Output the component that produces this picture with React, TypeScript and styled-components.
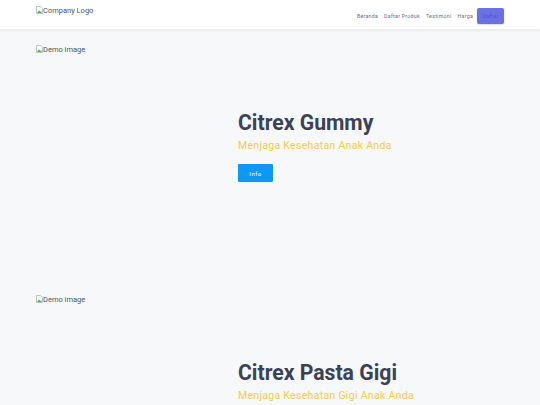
import styled, { createGlobalStyle } from 'styled-components';

const GlobalStyle = createGlobalStyle`
  body {
    margin: 0;
    background-color: #f7f8fa;
    font-family: Roboto, "Liberation Sans", sans-serif;
    overflow: hidden;
  }
`;

const Header = styled.header`
  height: 29px;
  background-color: #ffffff;
  box-shadow: 0 1px 3px rgba(0, 0, 0, 0.08);
  display: flex;
  align-items: flex-start;
  justify-content: space-between;
  padding: 0 36px;
`;

const Alt = styled.span<{ $top: number }>`
  display: inline-flex;
  align-items: flex-start;
  margin-top: ${props => props.$top}px;
  font-family: Roboto, "Liberation Sans", sans-serif;
  font-size: 7.5px;
  color: #555555;
  line-height: 9px;
`;

const Nav = styled.nav`
  display: flex;
  align-items: center;
  height: 32px;
`;

const NavLink = styled.a`
  font-size: 5.2px;
  letter-spacing: 0.3px;
  color: #6c707c;
  text-decoration: none;
  margin-right: 6px;

  &:last-of-type {
    margin-right: 4px;
  }
`;

const NavButton = styled.button`
  width: 27px;
  height: 16px;
  border: none;
  border-radius: 2px;
  background-color: #6b70e4;
  color: #5157c9;
  font-size: 5.2px;
  letter-spacing: 0.3px;
  padding: 0;
  font-family: Roboto, "Liberation Sans", sans-serif;
  box-shadow: 0 1px 2px rgba(0, 0, 0, 0.15);
`;

const Section = styled.section`
  display: grid;
  grid-template-columns: 202px 1fr;
  height: 250px;
  padding: 0 36px;
`;

const ImageCol = styled.div`
  padding-top: 9px;
`;

const TextCol = styled.div`
  padding-top: 79px;
`;

const Title = styled.h1`
  margin: 0;
  font-size: 21.2px;
  font-weight: 700;
  color: #3b4256;
  line-height: 29px;
`;

const Subtitle = styled.p`
  margin: 2px 0 0;
  font-size: 10.5px;
  letter-spacing: 0.3px;
  color: #f7c94d;
  line-height: 14px;
`;

const InfoButton = styled.button`
  margin-top: 11px;
  width: 35px;
  height: 18px;
  border: none;
  border-radius: 1px;
  background-color: #0b99f6;
  color: #ffffff;
  font-size: 6px;
  letter-spacing: 0.5px;
  padding: 0;
  font-family: Roboto, "Liberation Sans", sans-serif;
`;

function BrokenImage({ alt, top }: { alt: string; top: number }) {
  return (
    <Alt $top={top}>
      <svg width="7" height="8" viewBox="0 0 7 8">
        <path d="M0.5 0.5h4l2 2v5h-6z" fill="#fff" stroke="#9a9a9a" strokeWidth="0.6" />
        <path d="M1 7l2-2.5 1.5 1.5 1-1v2z" fill="#4caf50" />
      </svg>
      {alt}
    </Alt>
  );
}

const products = [
  { title: 'Citrex Gummy', tagline: 'Menjaga Kesehatan Anak Anda' },
  { title: 'Citrex Pasta Gigi', tagline: 'Menjaga Kesehatan Gigi Anak Anda' },
];

export default function App() {
  return (
    <>
      <GlobalStyle />
      <Header>
        <BrokenImage alt="Company Logo" top={6} />
        <Nav>
          <NavLink>Beranda</NavLink>
          <NavLink>Daftar Produk</NavLink>
          <NavLink>Testimoni</NavLink>
          <NavLink>Harga</NavLink>
          <NavButton>Daftar</NavButton>
        </Nav>
      </Header>
      {products.map(p => (
        <Section key={p.title}>
          <ImageCol>
            <BrokenImage alt="Demo image" top={0} />
          </ImageCol>
          <TextCol>
            <Title>{p.title}</Title>
            <Subtitle>{p.tagline}</Subtitle>
            <InfoButton>Info</InfoButton>
          </TextCol>
        </Section>
      ))}
    </>
  );
}
